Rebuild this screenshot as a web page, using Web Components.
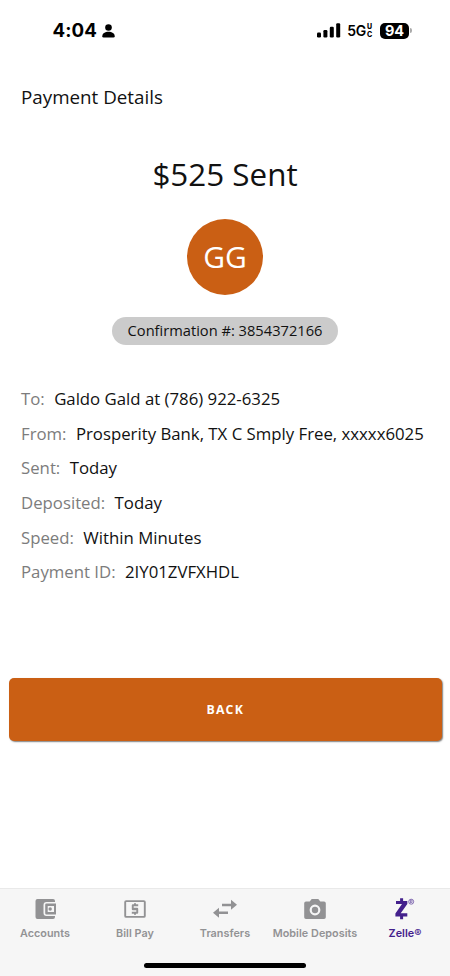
<!DOCTYPE html>
<html lang="en">
<head>
<meta charset="utf-8">
<title>Payment Details</title>
<style>
html, body { margin: 0; height: 100%; background: #fff; }
</style>
</head>
<body>
<payment-app></payment-app>
<script>
const define = (name, html) => customElements.define(name, class extends HTMLElement {
  constructor() {
    super();
    const t = document.createElement('template');
    t.innerHTML = html;
    this.attachShadow({ mode: 'open' }).append(t.content.cloneNode(true));
  }
});

define('status-bar', `
<style>
:host { display: flex; box-sizing: border-box; height: 61px; padding: 0 38px 0 52.500px; align-items: center; justify-content: space-between; font-family: Inter, sans-serif; color: #000; }
.group { display: flex; align-items: center; }
.time { font-size: 18.7px; font-weight: 700; line-height: 22px; letter-spacing: .05px; }
.person { margin-left: 5px; }
.net { font-size: 14px; font-weight: 600; margin-left: 6px; line-height: 20px; letter-spacing: -.3px; }
.stack { display: flex; flex-direction: column; font-size: 7px; font-weight: 800; line-height: 8px; margin: 1px 0 0 1px; width: 6px; }
.stack span { height: 8px; }
.battery { margin-left: 7px; width: 29px; height: 16px; border-radius: 5px; background: #000; color: #fff; font-size: 14.5px; font-weight: 700; line-height: 16px; text-align: center; }
.cap { width: 2px; height: 5px; margin-left: 1px; border-radius: 0 2px 2px 0; background: #aaa; }
svg { display: block; }
</style>
<div class="group"><span class="time">4:04</span>
<svg class="person" width="13" height="14" viewBox="0 0 13 14"><circle cx="6.5" cy="3.5" r="3.3"/><path d="M.3 12.2C.3 9.5 3 7.8 6.500 7.800S12.700 9.500 12.700 12.200Q12.700 13.500 11.400 13.500H1.600Q.3 13.500 .3 12.200Z"/></svg></div>
<div class="group">
<svg width="24" height="15" viewBox="0 0 24 15"><rect x="0" y="9.500" width="4" height="5" rx="1.200"/><rect x="6.400" y="7" width="4" height="7.500" rx="1.200"/><rect x="12.800" y="3.800" width="4" height="10.700" rx="1.200"/><rect x="19.200" y=".3" width="4" height="14.200" rx="1.200"/></svg>
<span class="net">5G</span><span class="stack"><span>U</span><span>C</span></span>
<span class="battery">94</span><span class="cap"></span></div>`);

define('initials-avatar', `
<style>
:host { display: flex; box-sizing: border-box; width: 76px; height: 76px; padding-top: 1px; border-radius: 50%; align-items: center; justify-content: center; background: #ca5f14; color: #fff; font: 30px/40px "Open Sans", sans-serif; }
</style><slot></slot>`);

define('confirmation-pill', `
<style>
:host { display: flex; box-sizing: border-box; width: 226px; height: 28px; padding: 0 0 2px 0; border-radius: 14px; align-items: center; justify-content: center; background: #cbcbcb; color: #111; font: 14.67px/20px "Open Sans", sans-serif; white-space: nowrap; }
</style><slot></slot>`);

define('detail-row', `
<style>
:host { display: flex; height: 34.6px; align-items: center; gap: 9.400px; font: 16.77px/24px "Open Sans", sans-serif; color: #111; white-space: nowrap; }
.label { color: #7c7c7c; }
</style><span class="label"><slot name="label"></slot></span><span><slot></slot></span>`);

define('action-button', `
<style>
:host { display: block; height: 63px; }
button { display: block; width: 100%; height: 100%; border: 0; padding: 1px 0 0; border-radius: 5px; background: #ca5f14; color: #fff; font: 700 12.3px/18px "Open Sans", sans-serif; letter-spacing: 1.25px; box-shadow: 1px 1px 1.500px rgba(0,0,0,.5); }
</style><button><slot></slot></button>`);

define('tab-item', `
<style>
:host { display: flex; width: 90px; flex: none; flex-direction: column; align-items: center; color: #929294; font: 600 10.8px/14px Inter, sans-serif; letter-spacing: .04px; white-space: nowrap; }
:host([active]) { color: #43208c; }
.icon { height: 26px; margin: 7px 0 5px; }
</style><span class="icon"><slot name="icon"></slot></span><span><slot></slot></span>`);

define('tab-bar', `
<style>
:host { display: flex; box-sizing: border-box; flex-direction: column; height: 88px; background: #f6f6f6; border-top: 1px solid #e9e9e9; }
nav { display: flex; flex: 1; align-items: flex-start; }
.home { width: 162px; height: 5px; border-radius: 3px; background: #000; margin: 0 auto 8px; }
svg { display: block; fill: currentColor; }
</style>
<nav>
<tab-item><svg slot="icon" width="26" height="26" viewBox="0 0 26 26"><path d="M5.500 3H21a2 2 0 0 1 2 2v1H14.500a3 3 0 0 0-3 3v8a3 3 0 0 0 3 3H23v1a2 2 0 0 1-2 2H5.500a2 2 0 0 1-2-2V5a2 2 0 0 1 2-2Z"/><path fill-rule="evenodd" d="M14.500 7.400H24v11.200H14.500a1.300 1.300 0 0 1-1.300-1.300V8.700a1.300 1.300 0 0 1 1.300-1.300ZM15.700 10v6H22V10Z"/><circle cx="18.200" cy="13" r="1.700"/></svg>Accounts</tab-item>
<tab-item><svg slot="icon" width="26" height="26" viewBox="0 0 26 26"><rect x="3.200" y="5.100" width="19.600" height="15.800" rx="1" fill="none" stroke="currentColor" stroke-width="1.900"/><path d="M12 7.200h2v1.100h2.200v2H11.700v1.500h3.500q1 0 1 1v3.900q0 1-1 1H14v1.100h-2v-1.100H9.800v-2h4.500v-1.500h-3.500q-1 0-1-1V9.300q0-1 1-1H12Z"/></svg>Bill Pay</tab-item>
<tab-item><svg slot="icon" width="26" height="26" viewBox="0 0 26 26"><path d="M10 7.700h9V3.800l6 5-6 5V10.200h-9ZM16 15.600H7V11.800l-6 5 6 5v-3.700h9Z"/></svg>Transfers</tab-item>
<tab-item><svg slot="icon" width="26" height="26" viewBox="0 0 26 26"><path fill-rule="evenodd" d="M9.700 3h6.600l2 2.400h3.700a1.800 1.800 0 0 1 1.800 1.800v14a1.800 1.800 0 0 1-1.800 1.800H4a1.800 1.800 0 0 1-1.800-1.800v-14A1.800 1.800 0 0 1 4 5.400h3.700ZM13 8.600a5.400 5.400 0 1 0 0 10.800 5.400 5.400 0 0 0 0-10.800Z"/><circle cx="13" cy="14" r="3.200"/></svg>Mobile Deposits</tab-item>
<tab-item active><svg slot="icon" width="26" height="26" viewBox="0 0 26 26"><path d="M8.100 2.200h3v2.700h4.200v3.100l-6.600 9.300h6.600v3.200h-4.200v2.700h-3v-2.700H3.400v-3.100l6.600-9.300H4V4.900h4.100Z"/><circle cx="19.200" cy="5.700" r="2.500" fill="none" stroke="currentColor" stroke-width=".6"/><path d="M18.400 7.200V4.200h1q.9 0 .9.900t-.9.900h-1M19.400 6l.9 1.200" fill="none" stroke="currentColor" stroke-width=".5"/></svg>Zelle®</tab-item>
</nav>
<div class="home"></div>`);

define('payment-app', `
<style>
:host { display: flex; flex-direction: column; width: 450px; height: 976px; background: #fff; color: #111; font-family: "Open Sans", sans-serif; overflow: hidden; }
h1 { margin: 22px 0 0 21px; font-size: 18.8px; font-weight: 400; line-height: 28px; }
.summary { display: flex; flex-direction: column; align-items: center; }
h2 { margin: 41px 0 0; font-size: 31.4px; font-weight: 400; line-height: 44px; }
initials-avatar { margin-top: 22.500px; }
confirmation-pill { margin-top: 22.500px; }
.details { margin: 36.900px 0 0 21px; }
action-button { margin: 88.500px 8.500px 0 9px; }
tab-bar { margin-top: auto; }
</style>
<status-bar></status-bar>
<h1>Payment Details</h1>
<section class="summary"><h2>$525 Sent</h2><initials-avatar>GG</initials-avatar><confirmation-pill>Confirmation #: 3854372166</confirmation-pill></section>
<section class="details">
<detail-row><span slot="label">To:</span>Galdo Gald at (786) 922-6325</detail-row>
<detail-row><span slot="label">From:</span>Prosperity Bank, TX C Smply Free, xxxxx6025</detail-row>
<detail-row><span slot="label">Sent:</span>Today</detail-row>
<detail-row><span slot="label">Deposited:</span>Today</detail-row>
<detail-row><span slot="label">Speed:</span>Within Minutes</detail-row>
<detail-row><span slot="label">Payment ID:</span>2IY01ZVFXHDL</detail-row>
</section>
<action-button>BACK</action-button>
<tab-bar></tab-bar>`);
</script>
</body>
</html>
